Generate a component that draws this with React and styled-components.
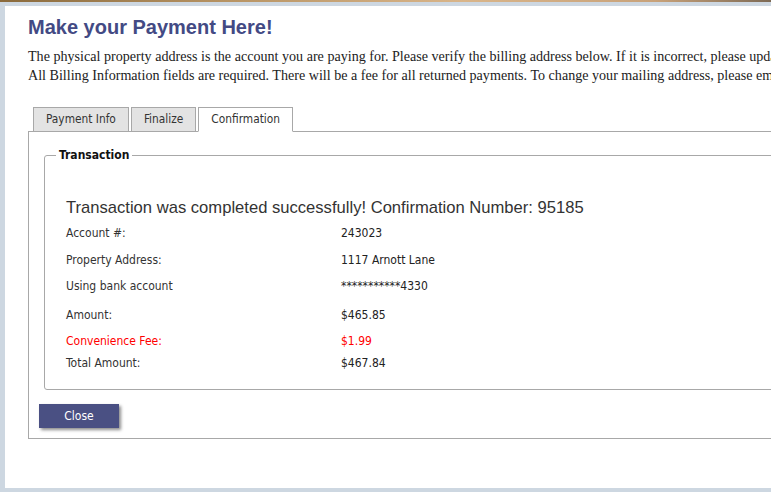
import React from 'react';
import styled, { createGlobalStyle } from 'styled-components';

const GlobalStyle = createGlobalStyle`
  html, body {
    margin: 0;
    padding: 0;
    background: #cdd7e1;
    overflow: hidden;
  }
`;

const Banner = styled.div`
  height: 2px;
  background: linear-gradient(90deg, #8a6a3c 0%, #b89464 30%, #d9b58a 60%, #c8a27a 85%, #7d6a55 100%);
`;

const Shell = styled.div`
  padding: 4px 0 0 5px;
  height: 486px;
  box-sizing: border-box;
`;

const Panel = styled.main`
  background: #fff;
  height: 100%;
  padding: 9px 0 0 23px;
  box-sizing: border-box;
  overflow: hidden;
`;

const Title = styled.h1`
  margin: 0;
  font-family: 'Liberation Sans', Arial, sans-serif;
  font-size: 20px;
  font-weight: bold;
  color: #434a84;
  line-height: 24px;
`;

const Intro = styled.p`
  margin: 8px 0 0;
  font-family: 'Liberation Serif', 'Times New Roman', serif;
  font-size: 14.1px;
  line-height: 19px;
  color: #222;
  white-space: nowrap;
`;

const Tabs = styled.section`
  margin-top: 22px;
  width: 1000px;
`;

const TabStrip = styled.ul`
  list-style: none;
  margin: 0;
  padding: 0 0 0 5px;
  display: flex;
  gap: 2px;
  position: relative;
  z-index: 1;
`;

const Tab = styled.li`
  font-family: 'DejaVu Sans Condensed', Tahoma, sans-serif;
  font-size: 11.8px;
  color: #333;
  height: 23px;
  line-height: 23px;
  padding: 0 12px;
  border: 1px solid #a8a8a8;
  border-bottom-color: ${p => (p.$active ? '#fff' : '#a8a8a8')};
  background: ${p => (p.$active ? '#fff' : '#e3e3e3')};
  margin-bottom: -1px;
`;

const TabBody = styled.div`
  border: 1px solid #a8a8a8;
  height: 308px;
  padding: 16px 0 0 10px;
  box-sizing: border-box;
`;

const Fieldset = styled.fieldset`
  margin: 0 0 0 5px;
  border: 1px solid #a8a8a8;
  border-radius: 3px;
  padding: 36px 0 14px 21px;
  height: 242px;
  box-sizing: border-box;
`;

const Legend = styled.legend`
  font-family: 'DejaVu Sans Condensed', Tahoma, sans-serif;
  font-size: 12px;
  font-weight: bold;
  color: #111;
  padding: 0 3px;
  margin-left: -10px;
`;

const Heading = styled.h2`
  margin: 0 0 3px;
  font-family: 'Liberation Sans', Arial, sans-serif;
  font-size: 16.6px;
  font-weight: normal;
  color: #333;
  line-height: 20px;
`;

const Details = styled.dl`
  margin: 0;
  display: grid;
  grid-template-columns: 275px auto;
  font-family: 'DejaVu Sans Condensed', Tahoma, sans-serif;
  font-size: 12px;
  line-height: 14px;
`;

const Label = styled.dt`
  margin: 0;
  color: ${p => (p.$alert ? '#ff0000' : '#333')};
  padding: ${p => p.$pad};
`;

const Value = styled.dd`
  margin: 0;
  color: ${p => (p.$alert ? '#ff0000' : '#222')};
  padding: ${p => p.$pad};
`;

const CloseButton = styled.button`
  margin: 14px 0 0 0;
  width: 80px;
  height: 24px;
  border: none;
  background: #4a5083;
  color: #fff;
  font-family: 'DejaVu Sans Condensed', Tahoma, sans-serif;
  font-size: 12px;
  box-shadow: 2px 2px 3px rgba(0, 0, 0, 0.45);
  cursor: pointer;
`;

const rows = [
  { label: 'Account #:', value: '243023', pad: '5px 0 7px' },
  { label: 'Property Address:', value: '1117 Arnott Lane', pad: '6px 0 6px' },
  { label: 'Using bank account', value: '***********4330', pad: '6px 0 8px' },
  { label: 'Amount:', value: '$465.85', pad: '7px 0 6px' },
  { label: 'Convenience Fee:', value: '$1.99', pad: '6px 0 3px', alert: true },
  { label: 'Total Amount:', value: '$467.84', pad: '5px 0 0' },
];

export default function App() {
  return (
    <>
      <GlobalStyle />
      <Banner />
      <Shell>
        <Panel>
          <Title>Make your Payment Here!</Title>
          <Intro>
            The physical property address is the account you are paying for. Please verify the billing address below. If it is incorrect, please update it before continuing.
            <br />
            All Billing Information fields are required. There will be a fee for all returned payments. To change your mailing address, please email our office.
          </Intro>
          <Tabs>
            <TabStrip>
              <Tab>Payment Info</Tab>
              <Tab>Finalize</Tab>
              <Tab $active>Confirmation</Tab>
            </TabStrip>
            <TabBody>
              <Fieldset>
                <Legend>Transaction</Legend>
                <Heading>Transaction was completed successfully! Confirmation Number: 95185</Heading>
                <Details>
                  {rows.map(r => (
                    <React.Fragment key={r.label}>
                      <Label $alert={r.alert} $pad={r.pad}>{r.label}</Label>
                      <Value $alert={r.alert} $pad={r.pad}>{r.value}</Value>
                    </React.Fragment>
                  ))}
                </Details>
              </Fieldset>
              <CloseButton>Close</CloseButton>
            </TabBody>
          </Tabs>
        </Panel>
      </Shell>
    </>
  );
}
